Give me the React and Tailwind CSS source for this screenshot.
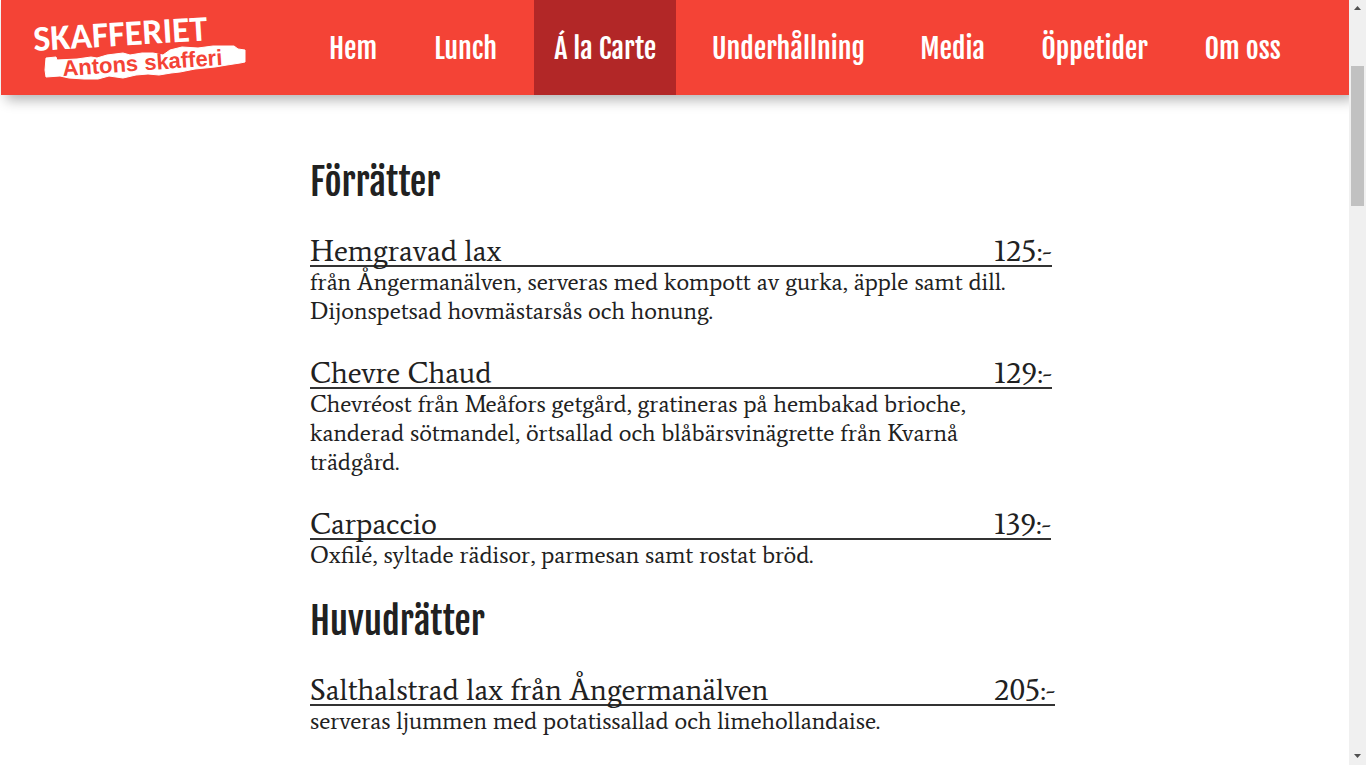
const NAV_ITEMS = [
  { label: "Hem", href: "#hem" },
  { label: "Lunch", href: "#lunch" },
  { label: "Á la Carte", href: "#a-la-carte", active: true },
  { label: "Underhållning", href: "#underhallning" },
  { label: "Media", href: "#media" },
  { label: "Öppetider", href: "#oppetider" },
  { label: "Om oss", href: "#om-oss" },
];

const SECTIONS = [
  {
    title: "Förrätter",
    dishes: [
      {
        name: "Hemgravad lax",
        price: "125:-",
        lines: [
          "från Ångermanälven, serveras med kompott av gurka, äpple samt dill.",
          "Dijonspetsad hovmästarsås och honung.",
        ],
      },
      {
        name: "Chevre Chaud",
        price: "129:-",
        lines: [
          "Chevréost från Meåfors getgård, gratineras på hembakad brioche,",
          "kanderad sötmandel, örtsallad och blåbärsvinägrette från Kvarnå",
          "trädgård.",
        ],
      },
      {
        name: "Carpaccio",
        price: "139:-",
        lines: ["Oxfilé, syltade rädisor, parmesan samt rostat bröd."],
      },
    ],
  },
  {
    title: "Huvudrätter",
    dishes: [
      {
        name: "Salthalstrad lax från Ångermanälven",
        price: "205:-",
        lines: ["serveras ljummen med potatissallad och limehollandaise."],
      },
    ],
  },
];

function Logo() {
  return (
    <svg
      viewBox="0 0 216 68"
      className="h-[68px] w-[216px] overflow-visible"
      role="img"
      aria-label="Skafferiet, Antons skafferi"
    >
      <path
        fill="#fff"
        stroke="#fff"
        strokeLinejoin="round"
        d="M15 44 L25 43 L26 46 L46 45 L60 43 L66 44 L76 41 L92 39 L99 41 L111 39 L122 39 L132 41 L139 36 L151 33 L167 34 L182 32 L203 32 L207 35 L214 36 L214 48 L209 49 L196 51 L184 53 L164 55 L149 58 L140 59 L128 61 L117 60 L105 61 L92 64 L78 62 L67 65 L53 65 L38 64 L29 62 L15 63 L14 56 Z"
      />
      <text
        x="3"
        y="37"
        transform="rotate(-3.5 3 37)"
        fill="#fff"
        className="font-['Carlito','Noto_Sans',sans-serif] text-[36px] font-bold"
      >
        SKAFFERIET
      </text>
      <text
        x="32"
        y="62"
        transform="rotate(-4 32 62)"
        fill="#f44336"
        className="font-['Liberation_Sans',sans-serif] text-[22px] font-bold"
      >
        Antons skafferi
      </text>
    </svg>
  );
}

function Header() {
  return (
    <header className="relative ml-px flex h-[95px] items-center bg-[#f44336] pr-12 pl-[30px] shadow-[5px_5px_12px_rgba(0,0,0,0.3)]">
      <a href="#hem" className="shrink-0">
        <Logo />
      </a>
      <nav className="ml-[62px] grid h-full grow grid-cols-[88fr_104fr_142fr_191fr_104fr_147fr_116fr] gap-x-4 font-['Fjalla_One','Roboto_Condensed',sans-serif] text-[28px] text-white">
        {NAV_ITEMS.map((item) => (
          <a
            key={item.label}
            href={item.href}
            aria-current={item.active ? "page" : undefined}
            className={
              item.active
                ? "flex items-center justify-center bg-[#b22727] pt-0.5 whitespace-nowrap"
                : "flex items-center justify-center pt-0.5 whitespace-nowrap"
            }
          >
            {item.label}
          </a>
        ))}
      </nav>
    </header>
  );
}

function Dish({ dish }) {
  return (
    <article>
      <h3 className="flex h-9 w-fit items-end border-b-2 border-[#333] text-[30px] leading-[28px]">
        <span className="w-[684px]">{dish.name}</span>
        <span className="whitespace-nowrap">{dish.price}</span>
      </h3>
      <p className="text-[24px] leading-[29px] whitespace-nowrap">
        {dish.lines.map((line) => (
          <span key={line} className="block">
            {line}
          </span>
        ))}
      </p>
    </article>
  );
}

function Scrollbar() {
  return (
    <div aria-hidden="true" className="relative z-10 flex w-[17px] shrink-0 flex-col items-center bg-[#f0f0f0]">
      <svg viewBox="0 0 17 17" className="h-[17px] w-[17px]">
        <path fill="#505050" d="M5 10 L8.500 6 L12 10 Z" />
      </svg>
      <div className="mt-[49px] h-[140px] w-[13px] bg-[#c1c1c1]" />
      <svg viewBox="0 0 17 17" className="mt-auto h-[17px] w-[17px]">
        <path fill="#505050" d="M5 6 L12 6 L8.500 10 Z" />
      </svg>
    </div>
  );
}

export default function App() {
  return (
    <div className="flex min-h-screen bg-white pb-[3px]">
      <div className="min-w-0 grow">
        <Header />
        <main className="pt-[59px] pl-[13px] font-['Average','Liberation_Serif',serif] text-[#212121]">
          <div className="mx-auto flex max-w-[742px] flex-col gap-6">
            {SECTIONS.map((section) => (
              <section key={section.title}>
                <h2 className="mb-5 font-['Fjalla_One','Roboto_Condensed',sans-serif] text-[37px] leading-[57px]">
                  {section.title}
                </h2>
                <div className="flex flex-col gap-7">
                  {section.dishes.map((dish) => (
                    <Dish key={dish.name} dish={dish} />
                  ))}
                </div>
              </section>
            ))}
          </div>
        </main>
      </div>
      <Scrollbar />
    </div>
  );
}
